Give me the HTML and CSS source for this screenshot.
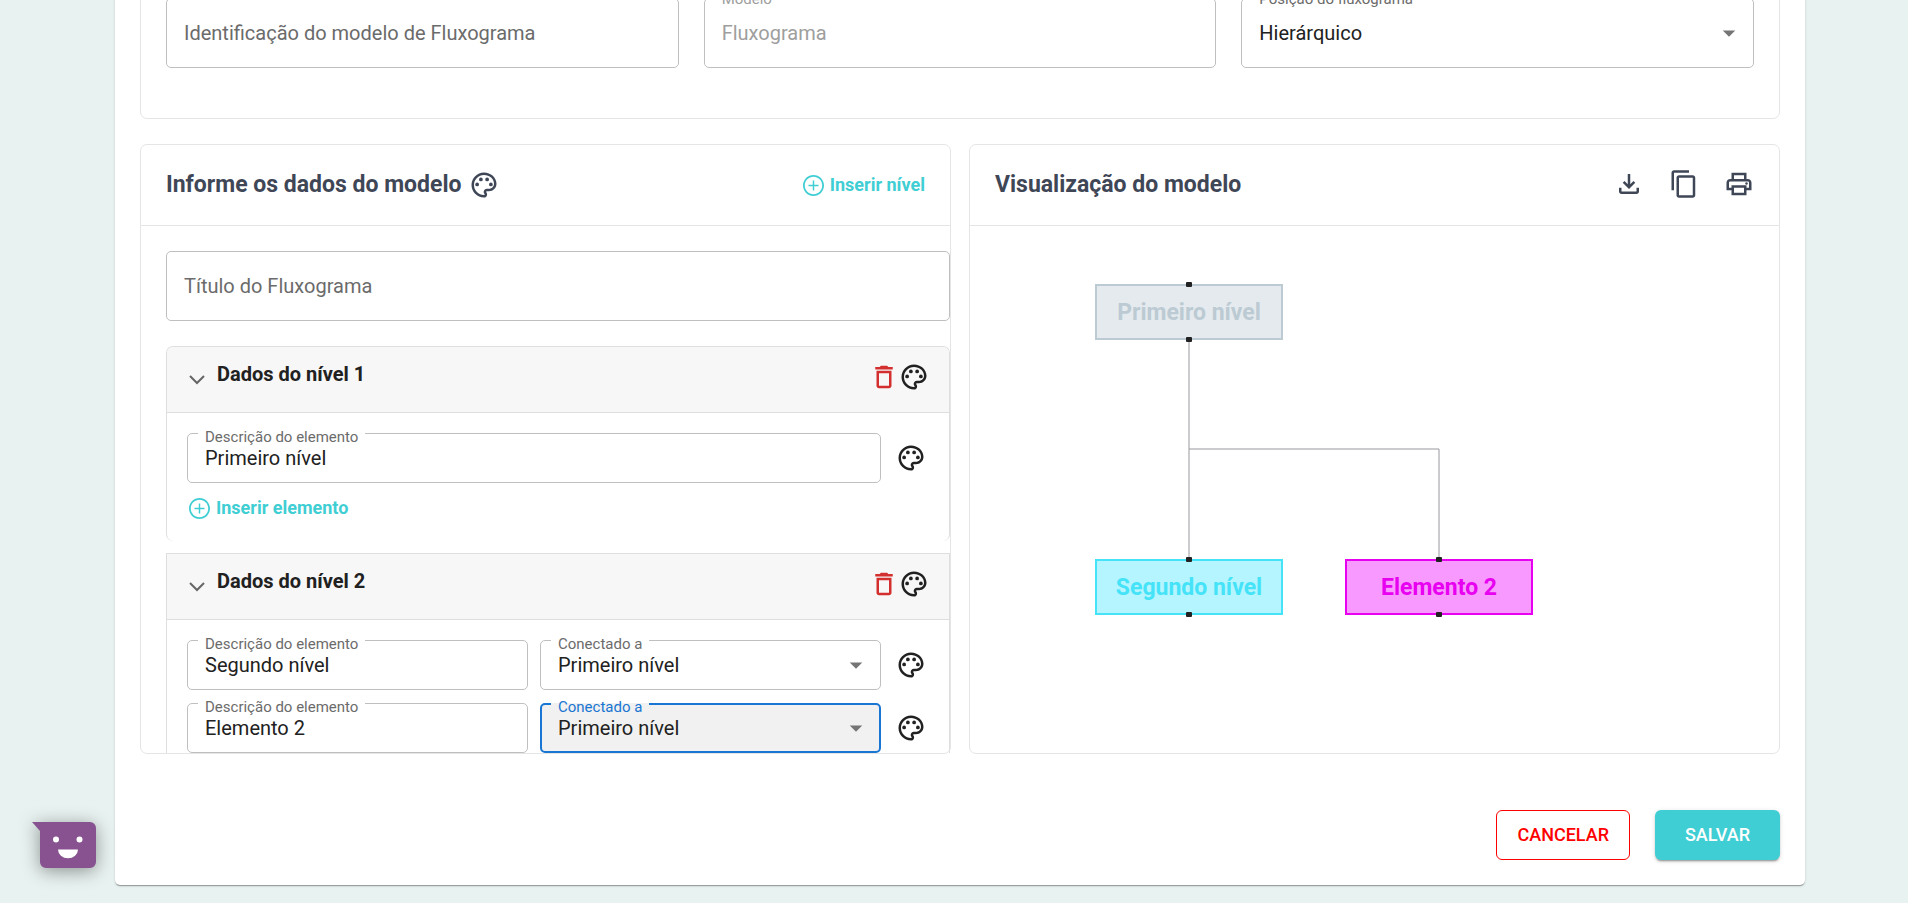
FILE: index.html
```html
<!DOCTYPE html>
<html lang="pt-BR">
<head>
<meta charset="utf-8">
<meta name="viewport" content="width=device-width, initial-scale=1">
<title>Fluxograma</title>
<link rel="stylesheet" href="styles.css">
</head>
<body>
<svg class="sprite" aria-hidden="true">
  <symbol id="i-palette" viewBox="0 0 24 24"><path d="M12 22C6.49 22 2 17.51 2 12S6.49 2 12 2s10 4.04 10 9c0 3.31-2.69 6-6 6h-1.77c-.28 0-.5.22-.5.5 0 .12.05.23.13.33.41.47.64 1.06.64 1.67 0 1.38-1.12 2.5-2.5 2.5zm0-18c-4.41 0-8 3.59-8 8s3.59 8 8 8c.28 0 .5-.22.5-.5 0-.16-.08-.28-.14-.35-.41-.46-.63-1.05-.63-1.65 0-1.38 1.12-2.5 2.5-2.5H16c2.21 0 4-1.79 4-4 0-3.86-3.59-7-8-7z"/><circle cx="6.5" cy="11.5" r="1.5"/><circle cx="9.5" cy="7.5" r="1.5"/><circle cx="14.5" cy="7.5" r="1.5"/><circle cx="17.5" cy="11.5" r="1.5"/></symbol>
  <symbol id="i-trash" viewBox="0 0 24 24"><path d="M6 19c0 1.1.9 2 2 2h8c1.1 0 2-.9 2-2V7H6v12zM8 9h8v10H8V9zm7.5-5-1-1h-5l-1 1H5v2h14V4z"/></symbol>
  <symbol id="i-plus" viewBox="2 2 20 20"><path d="M12.700 7.200h-1.400v4.100H7.200v1.400h4.100v4.100h1.400v-4.100h4.100v-1.400h-4.100V7.200zM12 2C6.480 2 2 6.480 2 12s4.480 10 10 10 10-4.480 10-10S17.520 2 12 2zm0 18.300c-4.570 0-8.300-3.730-8.300-8.300s3.730-8.300 8.300-8.300 8.300 3.730 8.300 8.300-3.730 8.300-8.300 8.300z"/></symbol>
  <symbol id="i-arrow" viewBox="0 0 24 24"><path d="m7 10 5 5 5-5z"/></symbol>
  <symbol id="i-chevron" viewBox="0 0 16 10"><path d="M1 1l7 7 7-7" fill="none" stroke="currentColor" stroke-width="2"/></symbol>
  <symbol id="i-download" viewBox="0 0 24 24"><path d="M18 15v3H6v-3H4v3c0 1.1.9 2 2 2h12c1.1 0 2-.9 2-2v-3h-2zm-1-4-1.41-1.41L13 12.17V4h-2v8.17L8.41 9.59 7 11l5 5 5-5z"/></symbol>
  <symbol id="i-copy" viewBox="0 0 24 24"><path d="M16 1H4c-1.1 0-2 .9-2 2v14h2V3h12V1zm3 4H8c-1.1 0-2 .9-2 2v14c0 1.1.9 2 2 2h11c1.1 0 2-.9 2-2V7c0-1.1-.9-2-2-2zm0 16H8V7h11v14z"/></symbol>
  <symbol id="i-print" viewBox="0 0 24 24"><path d="M19 8h-1V3H6v5H5c-1.66 0-3 1.34-3 3v6h4v4h12v-4h4v-6c0-1.66-1.34-3-3-3zM8 5h8v3H8V5zm8 12v2H8v-4h8v2zm2-2v-2H6v2H4v-4c0-.55.45-1 1-1h14c.55 0 1 .45 1 1v4h-2z"/><circle cx="18" cy="11.5" r="1"/></symbol>
</svg>

<main class="paper">
  <section class="panel settings">
    <div class="field">
      <input class="field-input" type="text" aria-label="Identificação do modelo de Fluxograma" placeholder="Identificação do modelo de Fluxograma">
    </div>
    <div class="field field-disabled">
      <label class="field-label" for="modelo">Modelo</label>
      <input class="field-input" id="modelo" type="text" value="Fluxograma" disabled>
    </div>
    <div class="field">
      <label class="field-label" for="posicao">Posição do fluxograma</label>
      <select class="field-input" id="posicao"><option>Hierárquico</option></select>
      <svg class="field-arrow"><use href="#i-arrow"/></svg>
    </div>
  </section>

  <div class="columns">
    <section class="panel">
      <header class="panel-head">
        <h2 class="panel-title">Informe os dados do modelo</h2>
        <button class="icon-btn" type="button" aria-label="Cores do modelo"><svg class="icon"><use href="#i-palette"/></svg></button>
        <button class="link-btn push" type="button"><svg class="icon-plus"><use href="#i-plus"/></svg>Inserir nível</button>
      </header>
      <div class="panel-scroll">
        <div class="field">
          <input class="field-input" type="text" aria-label="Título do Fluxograma" placeholder="Título do Fluxograma">
        </div>

        <section class="level level-first">
          <header class="level-head">
            <button class="level-toggle" type="button"><svg class="chevron"><use href="#i-chevron"/></svg><span class="level-title">Dados do nível 1</span></button>
            <button class="icon-btn danger" type="button" aria-label="Excluir nível 1"><svg class="icon"><use href="#i-trash"/></svg></button>
            <button class="icon-btn" type="button" aria-label="Cores do nível 1"><svg class="icon"><use href="#i-palette"/></svg></button>
          </header>
          <div class="level-body">
            <div class="row">
              <div class="field field-small">
                <label class="field-label" for="el1">Descrição do elemento</label>
                <input class="field-input" id="el1" type="text" value="Primeiro nível">
              </div>
              <button class="icon-btn" type="button" aria-label="Cores do elemento"><svg class="icon"><use href="#i-palette"/></svg></button>
            </div>
            <button class="link-btn" type="button"><svg class="icon-plus"><use href="#i-plus"/></svg>Inserir elemento</button>
          </div>
        </section>

        <section class="level">
          <header class="level-head">
            <button class="level-toggle" type="button"><svg class="chevron"><use href="#i-chevron"/></svg><span class="level-title">Dados do nível 2</span></button>
            <button class="icon-btn danger" type="button" aria-label="Excluir nível 2"><svg class="icon"><use href="#i-trash"/></svg></button>
            <button class="icon-btn" type="button" aria-label="Cores do nível 2"><svg class="icon"><use href="#i-palette"/></svg></button>
          </header>
          <div class="level-body">
            <div class="row">
              <div class="field field-small">
                <label class="field-label" for="el2">Descrição do elemento</label>
                <input class="field-input" id="el2" type="text" value="Segundo nível">
              </div>
              <div class="field field-small">
                <label class="field-label" for="con2">Conectado a</label>
                <select class="field-input" id="con2"><option>Primeiro nível</option></select>
                <svg class="field-arrow"><use href="#i-arrow"/></svg>
              </div>
              <button class="icon-btn" type="button" aria-label="Cores do elemento"><svg class="icon"><use href="#i-palette"/></svg></button>
            </div>
            <div class="row">
              <div class="field field-small">
                <label class="field-label" for="el3">Descrição do elemento</label>
                <input class="field-input" id="el3" type="text" value="Elemento 2">
              </div>
              <div class="field field-small field-active">
                <label class="field-label" for="con3">Conectado a</label>
                <select class="field-input" id="con3"><option>Primeiro nível</option></select>
                <svg class="field-arrow"><use href="#i-arrow"/></svg>
              </div>
              <button class="icon-btn" type="button" aria-label="Cores do elemento"><svg class="icon"><use href="#i-palette"/></svg></button>
            </div>
          </div>
        </section>
      </div>
    </section>

    <section class="panel">
      <header class="panel-head">
        <h2 class="panel-title">Visualização do modelo</h2>
        <div class="tools push">
          <button class="icon-btn" type="button" aria-label="Baixar"><svg class="icon"><use href="#i-download"/></svg></button>
          <button class="icon-btn" type="button" aria-label="Copiar"><svg class="icon"><use href="#i-copy"/></svg></button>
          <button class="icon-btn" type="button" aria-label="Imprimir"><svg class="icon"><use href="#i-print"/></svg></button>
        </div>
      </header>
      <div class="canvas">
        <svg class="edges" width="560" height="420" aria-hidden="true">
          <path d="M219 114V333M219 223H469V333"/>
        </svg>
        <div class="node node-1">Primeiro nível</div>
        <div class="node node-2">Segundo nível</div>
        <div class="node node-3">Elemento 2</div>
      </div>
    </section>
  </div>

  <footer class="actions">
    <button class="btn btn-cancel" type="button">CANCELAR</button>
    <button class="btn btn-save" type="button">SALVAR</button>
  </footer>
</main>

<button class="chat" type="button" aria-label="Abrir chat">
  <svg class="chat-icon" viewBox="0 0 64 46">
    <path d="M0 0H58a6 6 0 0 1 6 6V40a6 6 0 0 1-6 6H14a6 6 0 0 1-6-6V9z" fill="#87528f"/>
    <circle cx="24" cy="17.500" r="3" fill="#fff"/><circle cx="47.500" cy="17.500" r="3" fill="#fff"/>
    <path d="M26 27.500H46a10 8.700 0 0 1-20 0z" fill="#fff"/>
  </svg>
</button>
</body>
</html>
```
FILE: styles.css
```css
*, *::before, *::after { box-sizing: border-box; }

body {
  margin: 0;
  height: 100vh;
  overflow: hidden;
  background: #e8f2f0;
  color: #212121;
  font-family: Roboto, "Liberation Sans", sans-serif;
  font-size: 20px;
  line-height: 24px;
}

button, input, select { font: inherit; color: inherit; margin: 0; }

button { border: 0; padding: 0; background: none; cursor: pointer; }

svg { fill: currentColor; display: block; }

.sprite { position: absolute; width: 0; height: 0; }

.paper {
  margin: -27px 103px 0 115px;
  padding: 0 25px 25px;
  background: #fff;
  border-radius: 5px;
  box-shadow: 0 2px 1px -1px rgba(0, 0, 0, .2), 0 1px 1px rgba(0, 0, 0, .14), 0 1px 3px rgba(0, 0, 0, .12);
}

.panel {
  min-width: 0;
  border: 1px solid #e5e5e5;
  border-radius: 7px;
}

.settings {
  display: grid;
  grid-template-columns: repeat(3, 1fr);
  gap: 25px;
  padding: 24px 25px 50px;
}

.columns {
  display: grid;
  grid-template-columns: 1fr 1fr;
  gap: 18px;
  margin-top: 25px;
}

.panel-head {
  display: flex;
  align-items: center;
  height: 81px;
  padding: 0 25px;
  border-bottom: 1px solid #e5e5e5;
  color: #3f4757;
}

.panel-title { margin: 0; font-size: 23px; line-height: 28px; font-weight: 700; }

.panel-title + .icon-btn { margin-left: 7px; }

.push { margin-left: auto; }

.tools { display: flex; gap: 25px; padding-bottom: 3px; }

.icon-btn { flex: none; }

.icon { width: 30px; height: 30px; }

.danger { color: #d32f2f; }

.link-btn {
  display: flex;
  align-items: center;
  gap: 6px;
  color: #3fced3;
  font-size: 18px;
  font-weight: 700;
}

.icon-plus { width: 21px; height: 21px; }

.panel-scroll {
  max-height: 527px;
  padding: 25px 0 25px 25px;
  overflow: hidden auto;
  scrollbar-width: none;
}

/* Outlined fields */
.field { position: relative; flex: 1 1 0; min-width: 0; }

.field-input {
  display: block;
  width: 100%;
  height: 70px;
  padding: 0 17px;
  border: 1px solid #bfbfbf;
  border-radius: 5px;
  background: #fff;
  appearance: none;
  outline: 0;
}

.field-input::placeholder { color: #6b6b6b; opacity: 1; }

.field-small .field-input { height: 50px; }

.field-label {
  position: absolute;
  top: -8px;
  left: 11px;
  padding: 0 7px;
  background: #fff;
  color: #6b6b6b;
  font-size: 15px;
  line-height: 18px;
}

.field-small .field-label { top: -5px; }

.field-disabled .field-input, .field-disabled .field-label { color: #9e9e9e; }

.field-arrow {
  position: absolute;
  top: calc(50% - 15px);
  right: 10px;
  width: 30px;
  height: 30px;
  color: #757575;
  pointer-events: none;
}

.field-active .field-input {
  padding: 0 16px;
  border: 2px solid #1976d2;
  background: #f1f1f1;
}

.field-active .field-label {
  color: #1976d2;
  background: linear-gradient(transparent 5px, #f1f1f1 5px);
}

/* Levels */
.level {
  margin-top: 12px;
  border: solid #dedede;
  border-width: 1px 1px 0;
}

.level-first { margin-top: 25px; border-radius: 7px; overflow: hidden; }

.level-head {
  display: flex;
  align-items: center;
  height: 66px;
  padding: 0 20px 0 22px;
  background: #f7f7f7;
  border-bottom: 1px solid #dedede;
}

.level-head .icon-btn { margin-bottom: 6px; }

.level-toggle {
  flex: 1;
  display: flex;
  align-items: center;
  gap: 12px;
  margin-bottom: 12px;
  text-align: left;
}

.chevron { width: 16px; height: 10px; margin-top: 12px; color: #666; }

.level-title { font-weight: 700; }

.level-body {
  display: flex;
  flex-direction: column;
  align-items: stretch;
  gap: 13px;
  padding: 20px;
}

.level-body .link-btn { align-self: flex-start; margin-left: 2px; }

.level-first .level-body { padding-bottom: 21px; }

.row { display: flex; align-items: center; gap: 12px; }

.row .icon-btn { margin: 0 3px; }

/* Flowchart */
.canvas { position: relative; min-height: 527px; overflow: hidden; }

.edges { position: absolute; top: 0; left: 0; fill: none; stroke: #98989f; stroke-width: 1; }

.node {
  position: absolute;
  width: 188px;
  height: 56px;
  border: 2px solid;
  font-size: 23px;
  line-height: 53px;
  font-weight: 700;
  text-align: center;
}

.node::before, .node::after {
  content: "";
  position: absolute;
  left: calc(50% - 3px);
  width: 6px;
  height: 5px;
  border-radius: 1px;
  background: #222;
}

.node::before { top: -4px; }

.node::after { bottom: -4px; }

.node-1 { left: 125px; top: 58px; color: #bccad3; background: #e4eaee; }

.node-2 { left: 125px; top: 333px; color: #45e3f8; background: #b5f5ff; }

.node-3 { left: 375px; top: 333px; color: #e800f0; background: #f899ff; }

/* Footer */
.actions {
  display: flex;
  justify-content: flex-end;
  gap: 25px;
  margin-top: 56px;
}

.btn {
  min-width: 125px;
  height: 50px;
  padding: 0 20px;
  border-radius: 6px;
  font-size: 18px;
  font-weight: 500;
}

.btn-cancel { border: 1px solid #f00; color: #f00; }

.btn-save {
  background: #3fced3;
  color: #fff;
  box-shadow: 0 3px 1px -2px rgba(0, 0, 0, .2), 0 2px 2px rgba(0, 0, 0, .14), 0 1px 5px rgba(0, 0, 0, .12);
}

.chat { position: fixed; left: 32px; bottom: 35px; }

.chat-icon {
  width: 64px;
  height: 46px;
  filter: drop-shadow(0 3px 9px rgba(0, 0, 0, .4));
}
```
